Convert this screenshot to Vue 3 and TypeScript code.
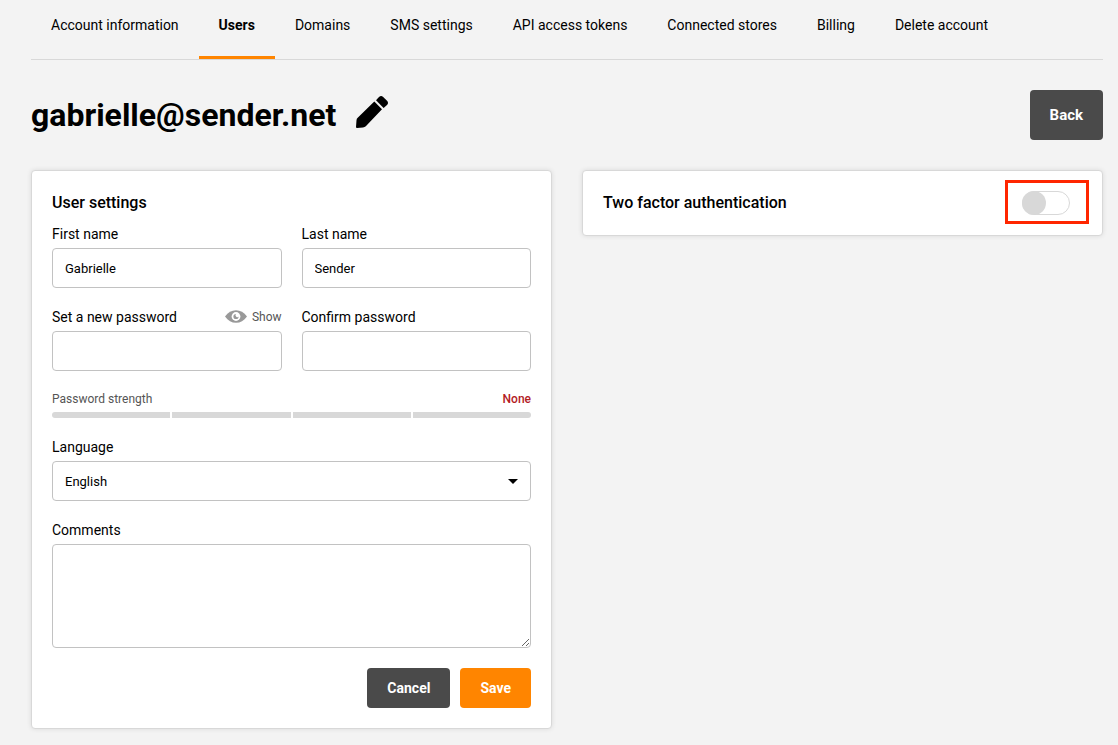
<script setup lang="ts">
import { ref } from 'vue'

interface Tab {
  label: string
  active?: boolean
}

const tabs: Tab[] = [
  { label: 'Account information' },
  { label: 'Users', active: true },
  { label: 'Domains' },
  { label: 'SMS settings' },
  { label: 'API access tokens' },
  { label: 'Connected stores' },
  { label: 'Billing' },
  { label: 'Delete account' },
]

const firstName = ref('Gabrielle')
const lastName = ref('Sender')
const password = ref('')
const confirmation = ref('')
const showPassword = ref(false)
const language = ref('English')
const comments = ref('')
const twoFactor = ref(false)
</script>

<template>
  <main class="page">
    <nav class="tabs">
      <a v-for="tab in tabs" :key="tab.label" href="#" class="tab" :class="{ active: tab.active }">{{ tab.label }}</a>
    </nav>

    <header class="title-row">
      <h1 class="title">gabrielle@sender.net</h1>
      <button type="button" class="edit" aria-label="Edit email">
        <svg width="32" height="32" viewBox="0 0 32 32" aria-hidden="true">
          <path d="M18.3 5.5 26 13.2 9.8 30.2Q8.700 31.300 7 31.500L1 32Q0 32 0 31L.5 24.200Q.6 22.800 1.700 21.800Z" />
          <path d="M20 4.200 23 1.100Q25-.8 27.200 1L31 4.800Q33 7 31 9L27.600 12Z" />
        </svg>
      </button>
      <button type="button" class="btn dark back">Back</button>
    </header>

    <div class="columns">
      <form class="card" @submit.prevent>
        <h2 class="heading">User settings</h2>
        <div class="fields">
          <div class="pair">
            <div class="field">
              <label for="first-name">First name</label>
              <input id="first-name" v-model="firstName" type="text" class="control" />
            </div>
            <div class="field">
              <label for="last-name">Last name</label>
              <input id="last-name" v-model="lastName" type="text" class="control" />
            </div>
          </div>

          <div class="pair">
            <div class="field">
              <div class="label-row">
                <label for="password">Set a new password</label>
                <button type="button" class="show" @click="showPassword = !showPassword">
                  <svg width="22" height="16" viewBox="0 0 22 16" aria-hidden="true">
                    <path fill="#999" d="M0 6.500C3 2.200 6.700.2 11 .2S19 2.200 22 6.500C19 10.800 15.300 12.800 11 12.800S3 10.800 0 6.500Z" />
                    <circle cx="11" cy="6.500" r="4.400" fill="#fff" />
                    <path fill="#999" d="M11 3.900A2.600 2.600 0 1 0 13.600 6.500 1.400 1.400 0 0 1 11 6.300 1.700 1.700 0 0 1 11 3.900Z" />
                  </svg>
                  Show
                </button>
              </div>
              <input id="password" v-model="password" :type="showPassword ? 'text' : 'password'" class="control" />
            </div>
            <div class="field">
              <label for="confirm">Confirm password</label>
              <input id="confirm" v-model="confirmation" :type="showPassword ? 'text' : 'password'" class="control" />
            </div>
          </div>

          <div class="strength">
            <div class="strength-text">
              <span>Password strength</span>
              <strong>None</strong>
            </div>
            <div class="bars"><i v-for="n in 4" :key="n"></i></div>
          </div>

          <div class="field">
            <label for="language">Language</label>
            <div class="select-box">
              <select id="language" v-model="language" class="control">
                <option>English</option>
              </select>
              <svg class="caret" width="10" height="5" viewBox="0 0 10 5" aria-hidden="true"><path d="M0 0H10L5 5Z" /></svg>
            </div>
          </div>

          <div class="field">
            <label for="comments">Comments</label>
            <textarea id="comments" v-model="comments" class="control comments"></textarea>
          </div>

          <div class="actions">
            <button type="button" class="btn dark">Cancel</button>
            <button type="submit" class="btn orange">Save</button>
          </div>
        </div>
      </form>

      <section class="card two-factor">
        <label for="two-factor" class="heading">Two factor authentication</label>
        <div class="switch-box">
          <input id="two-factor" v-model="twoFactor" type="checkbox" role="switch" class="switch" />
        </div>
      </section>
    </div>
  </main>
</template>

<style>
body {
  margin: 0;
  background: #f3f3f3;
}
</style>

<style scoped>
.page,
.page * {
  box-sizing: border-box;
}

.page {
  padding: 0 15px 16px 31px;
  color: #000;
  font: 14px/19px Roboto, "Liberation Sans", sans-serif;
}

button,
input,
select,
textarea {
  font-family: inherit;
}

.tabs {
  display: flex;
  border-bottom: 1px solid #d8d8d8;
}

.tab {
  padding: 16px 20px 21px;
  border-bottom: 3px solid transparent;
  color: #000;
  text-decoration: none;
  white-space: nowrap;
}

.tab.active {
  border-color: #ff8500;
  font-weight: 700;
}

.title-row {
  display: flex;
  align-items: center;
  margin: 30px 0;
}

.title {
  margin: 0;
  font-size: 32px;
  line-height: 50px;
  font-weight: 700;
}

.edit {
  display: flex;
  margin-left: 20px;
  padding: 0 0 6px;
  border: 0;
  background: none;
}

.btn {
  height: 40px;
  padding: 0 20px;
  border: 0;
  border-radius: 4px;
  color: #fff;
  font-size: 14px;
  font-weight: 700;
}

.dark {
  background: #4a4a4a;
}

.orange {
  background: #ff8500;
}

.back {
  height: 50px;
  margin-left: auto;
  font-size: 15px;
}

.columns {
  display: grid;
  grid-template-columns: 1fr 1fr;
  gap: 30px;
  align-items: start;
}

.card {
  padding: 20px;
  border: 1px solid #d8d8d8;
  border-radius: 4px;
  background: #fff;
  box-shadow: 0 0 5px rgba(0, 0, 0, 0.1);
}

.heading {
  margin: 0;
  font-size: 16px;
  line-height: 24px;
  font-weight: 500;
}

.fields {
  display: flex;
  flex-direction: column;
  gap: 20px;
  margin-top: 10px;
}

.pair {
  display: grid;
  grid-template-columns: 1fr 1fr;
  gap: 20px;
}

.field {
  display: flex;
  flex-direction: column;
  gap: 4px;
}

.label-row {
  display: flex;
  justify-content: space-between;
}

.show {
  display: flex;
  align-items: center;
  gap: 5px;
  padding: 0;
  border: 0;
  background: none;
  color: #555;
  font-size: 12px;
  line-height: 19px;
}

.control {
  width: 100%;
  height: 40px;
  padding: 0 12px;
  border: 1px solid #c2c2c2;
  border-radius: 4px;
  background: #fff;
  color: #000;
  font-size: 13px;
}

.comments {
  display: block;
  height: 104px;
  padding: 12px;
}

.select-box {
  position: relative;
}

.select-box select {
  display: block;
  appearance: none;
}

.caret {
  position: absolute;
  top: 18px;
  right: 13px;
  pointer-events: none;
}

.strength-text {
  display: flex;
  justify-content: space-between;
  margin-bottom: 5px;
  color: #555;
  font-size: 12px;
  line-height: 16px;
}

.strength-text strong {
  color: #b3201f;
  font-weight: 500;
}

.bars {
  display: flex;
  gap: 2px;
  overflow: hidden;
  border-radius: 3px;
}

.bars i {
  flex: 1;
  height: 6px;
  background: #d8d8d8;
}

.actions {
  display: flex;
  justify-content: flex-end;
  gap: 10px;
}

.two-factor {
  display: flex;
  justify-content: space-between;
}

.switch-box {
  position: relative;
  margin-right: 12px;
}

/* Highlight frame drawn around the switch */
.switch-box::after {
  content: "";
  position: absolute;
  inset: -11px -19px -9px -17px;
  border: 3px solid #ff2600;
  pointer-events: none;
}

.switch {
  display: flex;
  appearance: none;
  width: 48px;
  height: 24px;
  margin: 0;
  border: 1px solid #d8d8d8;
  border-radius: 12px;
  background: #fff;
}

.switch::before {
  content: "";
  width: 24px;
  height: 24px;
  margin: -1px;
  border-radius: 50%;
  background: #d8d8d8;
}

.switch:checked {
  justify-content: flex-end;
  background: #ff8500;
}
</style>
